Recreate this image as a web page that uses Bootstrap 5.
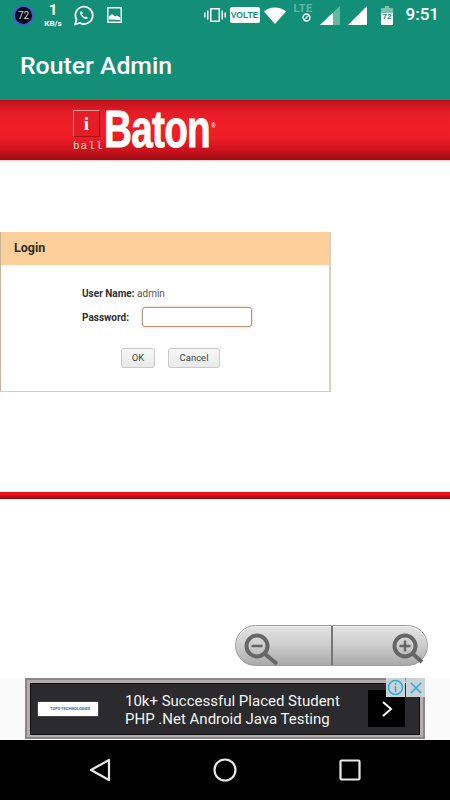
<!DOCTYPE html>
<html lang="en">
<head>
  <meta charset="UTF-8" />
  <meta name="viewport" content="width=device-width, initial-scale=1.0"/>
  <title>Router Admin</title>
  <link href="https://cdn.jsdelivr.net/npm/bootstrap@5.3.0/dist/css/bootstrap.min.css" rel="stylesheet">
  <style>
    html, body { margin: 0; height: 800px; overflow: hidden; background: #fff; }
    body { font-family: "Roboto", "Liberation Sans", sans-serif; }
    .phone { width: 450px; height: 800px; }

    .status-bar { height: 40px; background: #148f77; color: #fff; padding: 0 11px 10px 13px; }
    .batt-ring { width: 21px; height: 21px; border-radius: 50%; background: #070b16; border: 2px solid #3f63c8; font-size: 10px; line-height: 17px; text-align: center; color: #c9d3e6; flex: none; }
    .net-speed { width: 22px; margin-left: 8px; text-align: center; }
    .net-speed b { display: block; font-size: 15px; font-weight: 700; line-height: 15px; margin-bottom: 2px; }
    .net-speed span { display: block; font-size: 8px; font-weight: 700; line-height: 8px; white-space: nowrap; }
    .gap-wa { margin-left: 9px; }
    .gap-pic { margin-left: 13px; }
    .volte { width: 30px; height: 16px; background: #fff; color: #148f77; border-radius: 2px; font-size: 8.5px; font-weight: 700; line-height: 16px; text-align: center; font-family: "Liberation Sans", sans-serif; }
    .lte-box { width: 22px; height: 24px; position: relative; }
    .lte-word { position: absolute; left: 0; top: 0; font-size: 11px; font-weight: 700; letter-spacing: .5px; line-height: 12px; color: rgba(255,255,255,.35); }
    .lte-off { position: absolute; left: 8px; top: 10px; }
    .gap-batt { margin-left: 14px; }
    .gap-clock { margin-left: 13px; }
    .clock { font-size: 17px; font-weight: 500; }

    .app-bar { height: 60px; background: #148f77; color: #fff; padding-left: 20px; padding-bottom: 8px; font-size: 24.8px; font-weight: 500; }

    .brand-band { height: 61px; background: linear-gradient(to bottom, #bb0f17 0, #e21c26 18%, #f01f27 40%, #ee1e27 62%, #c8121b 85%, #9c0a10 100%); padding-left: 73px; border-bottom: 1px solid #e9c9c9; }
    .ib-mark { width: 28px; margin-top: 10px; color: #f6d9d9; }
    .ib-box { width: 27px; height: 27px; border: 1px solid #f09a9a; border-right-color: #a80f15; border-bottom-color: #a80f15; background: #e41e26; color: #fff; text-align: center; font-family: "Liberation Serif", serif; font-weight: 700; font-size: 19px; line-height: 26px; }
    .ib-ball { font-family: "Liberation Mono", monospace; font-size: 11px; letter-spacing: 1px; line-height: 12px; margin-top: 3px; }
    .baton { color: #fff; font-family: "Liberation Sans", sans-serif; font-weight: 700; font-size: 51px; letter-spacing: -1px; line-height: 60px; margin-left: 3px; transform: scaleX(.76); transform-origin: left center; -webkit-text-stroke: .8px #fff; }
    .baton sup { font-size: 7px; top: -2.7em; letter-spacing: 0; -webkit-text-stroke: 0; margin-left: 2px; }

    .web-view { height: 517px; padding-top: 71px; }
    .login-panel { width: 331px; height: 160px; border: 1px solid #dccfc0; border-left-color: #c9b49c; border-top: 0; border-right-width: 2px; background: #fff; color: #555; font-size: 10px; }
    .login-panel strong { color: #2f2f2f; }
    .login-head { height: 33px; background: #fdd09b; padding-left: 13px; line-height: 32px; font-size: 12.5px; font-weight: 700; color: #2f2a25; }
    .login-body { padding-left: 81px; padding-top: 21px; }
    .user-row { margin-bottom: 6px; }
    .pw-label { width: 60px; }
    .pw-input { width: 110px; height: 20px; border: 1px solid #b4987c; border-radius: 3px; background: #fff; box-shadow: 0 0 3px rgba(190,150,110,.6); padding: 0; }
    .btn-row { padding-left: 39px; gap: 13px; margin-top: 21px; }
    .old-btn { height: 20px; background: linear-gradient(to bottom, #f8f8f8, #e9e9e9); border: 1px solid #c9c9c9; border-radius: 3px; font-size: 9.5px; color: #444; padding: 0; line-height: 18px; }
    .ok-btn { width: 34px; }
    .cancel-btn { width: 52px; }
    .red-rule { height: 7px; margin-top: 100px; background: linear-gradient(to bottom, #e60f18 0, #f0141c 30%, #b80d14 70%, #8d0a10 100%); }
    .zoom-ctl { width: 193px; height: 41px; margin-left: 235px; margin-top: 126px; border-radius: 21px; border: 1px solid #9b9b9b; background: linear-gradient(to bottom, #e3e3e3 0, #cdcdcd 50%, #a9a9a9 100%); box-shadow: inset 0 1px 0 #f4f4f4; padding-left: 6px; padding-right: 1px; }
    .zoom-half { flex: 1 1 0; height: 100%; }
    .zoom-half:first-child { flex: 0 0 89px; }
    .zoom-half svg { margin-top: 6px; }
    .zoom-half + .zoom-half { border-left: 2px solid #777; }

    .ad-strip { height: 62px; background: #fafafa; position: relative; }
    .ad-frame { position: absolute; left: 25px; top: 0; width: 400px; height: 61px; background: #b6adb0; border: 2px solid #8a8587; padding: 3px 3px 2px 3px; }
    .ad-inner { height: 100%; background: #2b2b2d; border: 1px solid #0c0c0c; color: #f3f3f3; font-size: 15px; line-height: 18px; padding-left: 7px; }
    .ad-logo { width: 60px; height: 14px; background: #fff; color: #2b6ea5; font-size: 4px; font-weight: 700; line-height: 14px; padding-left: 12px; white-space: nowrap; overflow: hidden; box-shadow: 0 0 1px #bbb; }
    .ad-copy { margin-left: 27px; margin-top: 2px; white-space: nowrap; }
    .ad-next { position: absolute; right: 45px; top: 12px; width: 37px; height: 37px; background: #000; }
    .ad-info, .ad-close { position: absolute; top: 0; width: 19px; height: 19px; background: #c9d3d6; }
    .ad-info { right: 45px; }
    .ad-close { right: 25px; }

    .nav-bar { height: 60px; background: #000; padding-left: 89px; padding-right: 89px; }
  </style>
</head>
<body>
<div class="phone d-flex flex-column">

  <div class="status-bar d-flex align-items-center">
    <div class="batt-ring">72</div>
    <div class="net-speed"><b>1</b><span>KB/s</span></div>
    <svg class="gap-wa" width="21" height="21" viewBox="0 0 24 24" fill="none" stroke="#fff" stroke-width="2"><path d="M2.500 22l1.500-5.400A9.900 9.900 0 1 1 8 20.500z"/><path d="M8.800 7.500c-.9 1-.9 2.500.3 4.300 1.300 2 3 3.500 5 4.100 1.300.4 2.400-.3 2.900-1.400l-2.300-1.500-1.100 1c-1.300-.5-2.700-1.900-3.300-3.300l.9-1.100-1.200-2.500z" fill="#fff" stroke="none"/></svg>
    <svg class="gap-pic" width="15" height="16" viewBox="0 0 15 16"><rect x=".75" y=".75" width="13.500" height="14.500" fill="none" stroke="#fff" stroke-width="1.500"/><path d="M2 12.500V9.500l3-2.500 3 2.500 2-1 3 2v2.500z" fill="#fff"/></svg>

    <svg class="ms-auto" width="22" height="16" viewBox="0 0 22 16" fill="#fff"><path d="M6 1h10v14H6zM7.500 2.500v11h7v-11z" fill-rule="evenodd"/><rect x="3" y="3.500" width="1.500" height="9"/><rect x="17.500" y="3.500" width="1.500" height="9"/><rect x="0" y="5.500" width="1.500" height="5"/><rect x="20.500" y="5.500" width="1.500" height="5"/></svg>
    <div class="volte ms-1">VOLTE</div>
    <svg class="ms-1" width="22" height="17" viewBox="0 0 22 17"><path d="M0 4.500C3 2 7 .5 11 .5s8 1.500 11 4L11 17z" fill="#fff"/></svg>
    <div class="lte-box ms-2">
      <span class="lte-word">LTE</span>
      <svg class="lte-off" width="9" height="9" viewBox="0 0 9 9" fill="none" stroke="#fff" stroke-width="1.300"><circle cx="4.500" cy="4.500" r="3.500"/><path d="M2 7l5-5"/></svg>
    </div>
    <svg class="ms-1" width="20" height="19" viewBox="0 0 20 19"><path d="M0 19L20 0v19z" fill="rgba(255,255,255,.35)"/><path d="M0 19L13 6.600V19z" fill="#fff"/></svg>
    <svg class="ms-2" width="19" height="19" viewBox="0 0 19 19"><path d="M0 19L19 0v19z" fill="#fff"/></svg>
    <svg class="gap-batt" width="12" height="19" viewBox="0 0 12 19"><path d="M4 0h4v2h4v5H0V2h4z" fill="rgba(255,255,255,.45)"/><path d="M0 7h12v12H0z" fill="#fff"/><text x="6" y="13" font-size="8" font-weight="700" text-anchor="middle" fill="#148f77" font-family="Liberation Sans">72</text></svg>
    <div class="clock gap-clock">9:51</div>
  </div>

  <div class="app-bar d-flex align-items-center">Router Admin</div>

  <div class="brand-band d-flex">
    <div class="ib-mark">
      <div class="ib-box">i</div>
      <div class="ib-ball">ball</div>
    </div>
    <div class="baton">Baton<sup>®</sup></div>
  </div>

  <div class="web-view">
    <div class="login-panel">
      <div class="login-head">Login</div>
      <div class="login-body">
        <div class="user-row"><strong>User Name:</strong> admin</div>
        <div class="d-flex align-items-center">
          <strong class="pw-label">Password:</strong>
          <input class="pw-input" type="password" aria-label="Password">
        </div>
        <div class="btn-row d-flex">
          <button class="old-btn ok-btn" type="button">OK</button>
          <button class="old-btn cancel-btn" type="button">Cancel</button>
        </div>
      </div>
    </div>
    <div class="red-rule"></div>
    <div class="zoom-ctl d-flex align-items-center">
      <div class="zoom-half d-flex align-items-center">
        <svg width="36" height="36" viewBox="0 0 36 36" fill="none" stroke="#666"><circle cx="15" cy="15" r="10.500" stroke-width="4"/><path d="M23 23l12 10" stroke-width="4"/><path d="M9.500 15h11" stroke-width="2.500"/></svg>
      </div>
      <div class="zoom-half d-flex align-items-center justify-content-end">
        <svg width="36" height="36" viewBox="0 0 36 36" fill="none" stroke="#666"><circle cx="15" cy="15" r="10.500" stroke-width="4"/><path d="M23 23l9 8" stroke-width="4"/><path d="M9.500 15h11M15 9.500v11" stroke-width="2.500"/></svg>
      </div>
    </div>
  </div>

  <div class="ad-strip">
    <div class="ad-frame">
      <div class="ad-inner d-flex align-items-center">
        <div class="ad-logo">TOPS TECHNOLOGIES</div>
        <div class="ad-copy">10k+ Successful Placed Student<br>PHP .Net Android Java Testing</div>
      </div>
    </div>
    <div class="ad-next d-flex align-items-center justify-content-center">
      <svg width="12" height="18" viewBox="0 0 12 18" fill="none" stroke="#fff" stroke-width="2"><path d="M2 2l8 7-8 7"/></svg>
    </div>
    <div class="ad-info d-flex align-items-center justify-content-center">
      <svg width="17" height="17" viewBox="0 0 17 17" fill="none" stroke="#28a9d6" stroke-width="1.500"><circle cx="8.500" cy="8.500" r="7"/><path d="M8.500 7v6M8.500 4v1.800"/></svg>
    </div>
    <div class="ad-close d-flex align-items-center justify-content-center">
      <svg width="14" height="14" viewBox="0 0 14 14" fill="none" stroke="#28a9d6" stroke-width="1.500"><path d="M2 2l10 10M12 2L2 12"/></svg>
    </div>
  </div>

  <div class="nav-bar d-flex align-items-center justify-content-between">
    <svg width="22" height="24" viewBox="0 0 22 24" fill="none" stroke="#e8e8e8" stroke-width="2.200" stroke-linejoin="round"><path d="M20 2v20L2 12z"/></svg>
    <svg width="24" height="24" viewBox="0 0 24 24" fill="none" stroke="#e8e8e8" stroke-width="2.200"><circle cx="12" cy="12" r="10.500"/></svg>
    <svg width="22" height="22" viewBox="0 0 22 22" fill="none" stroke="#e8e8e8" stroke-width="2.200" stroke-linejoin="round"><rect x="1.500" y="1.500" width="19" height="19" rx="1"/></svg>
  </div>
</div>
<script src="https://cdn.jsdelivr.net/npm/bootstrap@5.3.0/dist/js/bootstrap.bundle.min.js"></script>
</body>
</html>
